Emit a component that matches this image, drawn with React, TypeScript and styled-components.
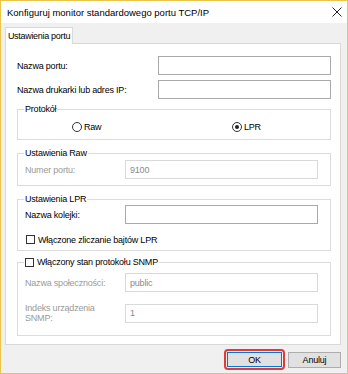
import React from "react";
import styled, { createGlobalStyle } from "styled-components";

const Global = createGlobalStyle`
  html, body { margin: 0; padding: 0; background: #f0f0f0; }
  * { box-sizing: border-box; }
  body { font-family: "Liberation Sans", Arial, sans-serif; font-size: 9px; letter-spacing: -0.2px; color: #000; }
`;

const Window = styled.div`
  width: 348px;
  height: 374px;
  border: 1px solid #e9c648;
  background: #f0f0f0;
  display: flex;
  flex-direction: column;
`;

const TitleBar = styled.div`
  height: 22px;
  background: #fff;
  display: flex;
  align-items: center;
  justify-content: space-between;
  padding: 0 5px 0 6px;
  font-size: 9.5px;
  letter-spacing: 0;
  color: #000;
`;

const Close = styled.svg`
  width: 10px;
  height: 10px;
`;

const Body = styled.div`
  flex: 1;
  padding: 4px 6px 0 4px;
  display: flex;
  flex-direction: column;
`;

const TabStrip = styled.div`
  display: flex;
  height: 16px;
`;

const Tab = styled.div`
  width: 68px;
  height: 17px;
  background: #fff;
  border: 1px solid #d9d9d9;
  border-bottom: none;
  display: flex;
  align-items: center;
  justify-content: center;
  white-space: nowrap;
  letter-spacing: -0.3px;
  position: relative;
  z-index: 1;
`;

const Panel = styled.div`
  height: 302px;
  background: #fff;
  border: 1px solid #d9d9d9;
  padding: 12px 9px 0 11px;
  display: flex;
  flex-direction: column;
`;

const Row = styled.div<{ $mt?: number }>`
  display: flex;
  align-items: center;
  justify-content: space-between;
  margin-top: ${(p) => p.$mt ?? 0}px;
`;

const Label = styled.span<{ $disabled?: boolean }>`
  color: ${(p) => (p.$disabled ? "#9a9a9a" : "#000")};
  line-height: 10px;
`;

const Input = styled.div<{ $w: number; $disabled?: boolean }>`
  width: ${(p) => p.$w}px;
  height: 19px;
  border: 1px solid ${(p) => (p.$disabled ? "#d9d9d9" : "#a9a9a9")};
  background: #fff;
  color: #8a8a8a;
  display: flex;
  align-items: center;
  padding-left: 4px;
`;

const Group = styled.fieldset<{ $mt: number; $pt: number; $pb: number }>`
  margin: ${(p) => p.$mt}px 0 0 0;
  padding: ${(p) => p.$pt}px 12px ${(p) => p.$pb}px 7px;
  border: 1px solid #dcdcdc;
  min-width: 0;
`;

const Legend = styled.legend`
  padding: 0 1px;
  margin-left: -1px;
  line-height: 12px;
  display: flex;
  align-items: center;
  gap: 3px;
`;

const RadioRow = styled.div`
  display: grid;
  grid-template-columns: 160px 1fr;
  padding-left: 47px;
  height: 13px;
  align-items: center;
`;

const Option = styled.label`
  display: flex;
  align-items: center;
  gap: 2px;
`;

const Radio = styled.span<{ $checked?: boolean }>`
  width: 10px;
  height: 10px;
  border-radius: 50%;
  border: 1px solid #333;
  background: #fff;
  display: flex;
  align-items: center;
  justify-content: center;
  &::after {
    content: "";
    width: 4px;
    height: 4px;
    border-radius: 50%;
    background: ${(p) => (p.$checked ? "#222" : "transparent")};
  }
`;

const Check = styled.span`
  width: 9px;
  height: 9px;
  border: 1px solid #333;
  background: #fff;
  flex: none;
`;

const CheckRow = styled.label<{ $mt?: number }>`
  display: flex;
  align-items: center;
  gap: 3px;
  height: 13px;
  margin-top: ${(p) => p.$mt ?? 0}px;
  margin-left: 1px;
`;

const Footer = styled.div`
  display: flex;
  justify-content: flex-end;
  align-items: center;
  gap: 3px;
  padding-top: 4px;
`;

const Focus = styled.div`
  border: 2px solid #e53935;
  border-radius: 4px;
  padding: 1px;
  display: flex;
`;

const Button = styled.div<{ $primary?: boolean }>`
  width: ${(p) => (p.$primary ? 55 : 53)}px;
  height: ${(p) => (p.$primary ? 15 : 16)}px;
  background: #e1e1e1;
  border: 1px solid ${(p) => (p.$primary ? "#0078d7" : "#adadad")};
  display: flex;
  align-items: center;
  justify-content: center;
  font-size: 9px;
`;

export default function App() {
  return (
    <>
      <Global />
      <Window>
        <TitleBar>
          <span>Konfiguruj monitor standardowego portu TCP/IP</span>
          <Close viewBox="0 0 10 10">
            <path d="M0.5 0.5 L9.5 9.5 M9.5 0.5 L0.5 9.5" stroke="#222" strokeWidth="1" />
          </Close>
        </TitleBar>
        <Body>
          <TabStrip>
            <Tab>Ustawienia portu</Tab>
          </TabStrip>
          <Panel>
            <Row>
              <Label>Nazwa portu:</Label>
              <Input $w={173} />
            </Row>
            <Row $mt={5}>
              <Label>Nazwa drukarki lub adres IP:</Label>
              <Input $w={173} />
            </Row>
            <Group $mt={4} $pt={5} $pb={6}>
              <Legend>Protokół</Legend>
              <RadioRow>
                <Option>
                  <Radio /> Raw
                </Option>
                <Option>
                  <Radio $checked /> LPR
                </Option>
              </RadioRow>
            </Group>
            <Group $mt={7} $pt={1} $pb={6}>
              <Legend>Ustawienia Raw</Legend>
              <Row>
                <Label $disabled>Numer portu:</Label>
                <Input $w={193} $disabled>9100</Input>
              </Row>
            </Group>
            <Group $mt={7} $pt={0} $pb={4}>
              <Legend>Ustawienia LPR</Legend>
              <Row>
                <Label>Nazwa kolejki:</Label>
                <Input $w={193} />
              </Row>
              <CheckRow $mt={9}>
                <Check /> Włączone zliczanie bajtów LPR
              </CheckRow>
            </Group>
            <Group $mt={5} $pt={5} $pb={12}>
              <Legend>
                <Check /> Włączony stan protokołu SNMP
              </Legend>
              <Row>
                <Label $disabled>Nazwa społeczności:</Label>
                <Input $w={193} $disabled>public</Input>
              </Row>
              <Row $mt={11}>
                <Label $disabled>
                  Indeks urządzenia
                  <br />
                  SNMP:
                </Label>
                <Input $w={193} $disabled>1</Input>
              </Row>
            </Group>
          </Panel>
          <Footer>
            <Focus>
              <Button $primary>OK</Button>
            </Focus>
            <Button>Anuluj</Button>
          </Footer>
        </Body>
      </Window>
    </>
  );
}
